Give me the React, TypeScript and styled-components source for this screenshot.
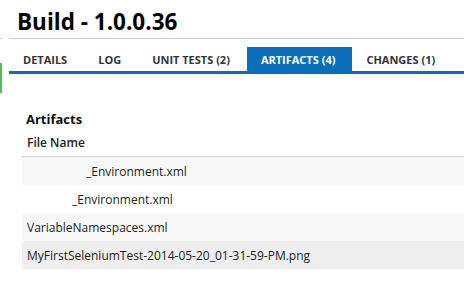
import styled, { createGlobalStyle } from 'styled-components';

const GlobalStyle = createGlobalStyle`
    body {
        margin: 0;
        background: #ffffff;
        font-family: "Open Sans", "Noto Sans", sans-serif;
        color: #222222;
    }
`;

const Page = styled.div`
    display: flex;
    width: 464px;
    height: 287px;
    overflow: hidden;
`;

const Gutter = styled.div`
    width: 9px;
    flex-shrink: 0;
    display: flex;
    flex-direction: column;
`;

const GutterTick = styled.div`
    margin-top: 38px;
    width: 2px;
    height: 1px;
    background: #cccccc;
`;

const GutterMark = styled.div`
    margin-top: 24px;
    width: 2px;
    height: 30px;
    background: #5cb85c;
`;

const Main = styled.div`
    flex: 1;
    display: flex;
    flex-direction: column;
`;

const Header = styled.div`
    height: 39px;
    border-bottom: 1px solid #cccccc;
    padding-left: 8px;
    box-sizing: border-box;
`;

const Title = styled.h1`
    margin: 0;
    padding-top: 9px;
    font-size: 22.5px;
    line-height: 26px;
    font-weight: 700;
    color: #000000;
`;

const TabBar = styled.div`
    display: flex;
    margin-top: 8px;
    border-bottom: 3px solid #0a6ebd;
`;

const Tab = styled.div<{ $active?: boolean }>`
    height: 24px;
    line-height: 26px;
    padding: 0 17px 0 14px;
    font-size: 11px;
    font-weight: 700;
    text-transform: uppercase;
    color: ${p => (p.$active ? '#ffffff' : '#333333')};
    background: ${p => (p.$active ? '#0a6ebd' : 'transparent')};
    white-space: nowrap;
`;

const Content = styled.div`
    padding: 36px 0 0 13px;
`;

const SectionTitle = styled.div`
    font-size: 13px;
    font-weight: 700;
    line-height: 18px;
    padding-left: 4px;
    color: #111111;
`;

const ColumnHeader = styled.div`
    font-size: 12px;
    font-weight: 600;
    line-height: 18px;
    padding: 6px 0 4px 5px;
    color: #222222;
    border-bottom: 1px solid #cccccc;
`;

const Row = styled.div<{ $shade: string; $indent: number }>`
    height: 28px;
    display: flex;
    align-items: center;
    padding-left: ${p => p.$indent}px;
    background: ${p => p.$shade};
    font-size: 12px;
    color: #222222;
    white-space: nowrap;
`;

const files = [
    { name: '_Environment.xml', indent: 64, shade: '#f8f8f8' },
    { name: '_Environment.xml', indent: 50, shade: '#ffffff' },
    { name: 'VariableNamespaces.xml', indent: 5, shade: '#f8f8f8' },
    { name: 'MyFirstSeleniumTest-2014-05-20_01-31-59-PM.png', indent: 5, shade: '#eeeeee' },
];

const tabs = ['Details', 'Log', 'Unit Tests (2)', 'Artifacts (4)', 'Changes (1)'];

const App: React.FC = () => {
    return (
        <Page>
            <GlobalStyle />
            <Gutter>
                <GutterTick />
                <GutterMark />
            </Gutter>
            <Main>
                <Header>
                    <Title>Build - 1.0.0.36</Title>
                </Header>
                <TabBar>
                    {tabs.map(t => (
                        <Tab key={t} $active={t === 'Artifacts (4)'}>{t}</Tab>
                    ))}
                </TabBar>
                <Content>
                    <SectionTitle>Artifacts</SectionTitle>
                    <ColumnHeader>File Name</ColumnHeader>
                    {files.map((f, i) => (
                        <Row key={i} $shade={f.shade} $indent={f.indent}>{f.name}</Row>
                    ))}
                </Content>
            </Main>
        </Page>
    );
};

export default App;
